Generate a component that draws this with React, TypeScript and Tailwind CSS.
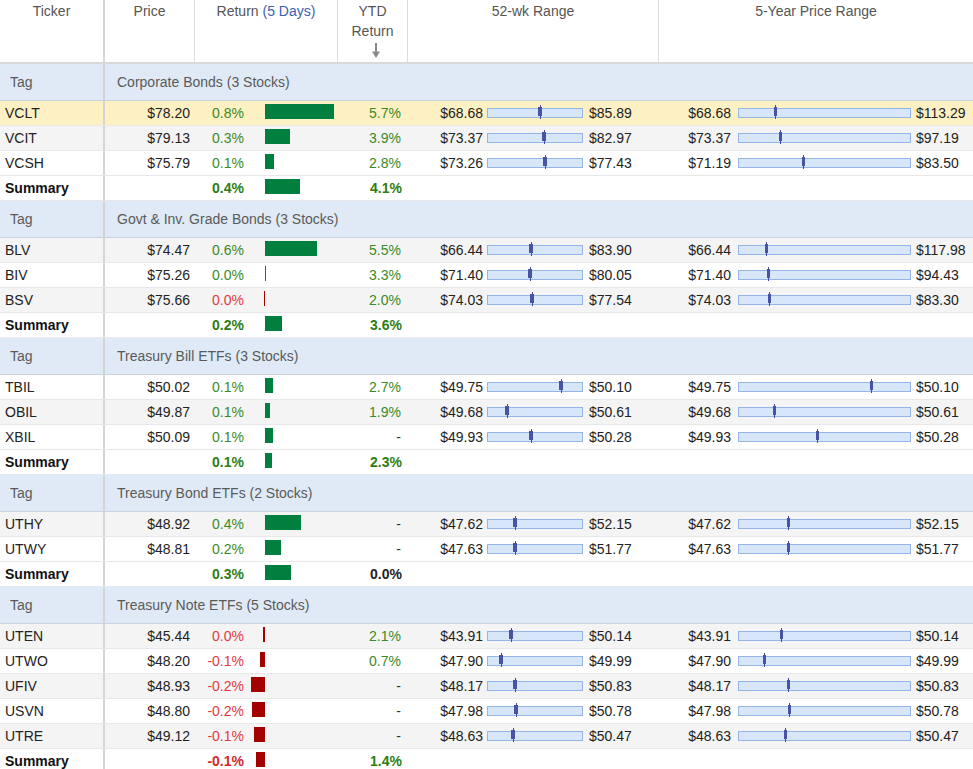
import React from "react";

type Row = {
  ticker: string;
  price: string;
  ret: string;
  bar: number;
  ytd: string;
  wk: [number, number];
  yr: [number, number];
};

type Group = {
  label: string;
  rows: Row[];
  sumRet: string;
  sumBar: number;
  sumYtd: string;
};

const groups: Group[] = [
  {
    label: "Corporate Bonds (3 Stocks)",
    rows: [
      { ticker: "VCLT", price: "78.20", ret: "0.8%", bar: 69, ytd: "5.7%", wk: [68.68, 85.89], yr: [68.68, 113.29] },
      { ticker: "VCIT", price: "79.13", ret: "0.3%", bar: 25, ytd: "3.9%", wk: [73.37, 82.97], yr: [73.37, 97.19] },
      { ticker: "VCSH", price: "75.79", ret: "0.1%", bar: 9, ytd: "2.8%", wk: [73.26, 77.43], yr: [71.19, 83.5] },
    ],
    sumRet: "0.4%",
    sumBar: 35,
    sumYtd: "4.1%",
  },
  {
    label: "Govt & Inv. Grade Bonds (3 Stocks)",
    rows: [
      { ticker: "BLV", price: "74.47", ret: "0.6%", bar: 52, ytd: "5.5%", wk: [66.44, 83.9], yr: [66.44, 117.98] },
      { ticker: "BIV", price: "75.26", ret: "0.0%", bar: 1, ytd: "3.3%", wk: [71.4, 80.05], yr: [71.4, 94.43] },
      { ticker: "BSV", price: "75.66", ret: "0.0%", bar: -1, ytd: "2.0%", wk: [74.03, 77.54], yr: [74.03, 83.3] },
    ],
    sumRet: "0.2%",
    sumBar: 17,
    sumYtd: "3.6%",
  },
  {
    label: "Treasury Bill ETFs (3 Stocks)",
    rows: [
      { ticker: "TBIL", price: "50.02", ret: "0.1%", bar: 8, ytd: "2.7%", wk: [49.75, 50.1], yr: [49.75, 50.1] },
      { ticker: "OBIL", price: "49.87", ret: "0.1%", bar: 5, ytd: "1.9%", wk: [49.68, 50.61], yr: [49.68, 50.61] },
      { ticker: "XBIL", price: "50.09", ret: "0.1%", bar: 8, ytd: "-", wk: [49.93, 50.28], yr: [49.93, 50.28] },
    ],
    sumRet: "0.1%",
    sumBar: 7,
    sumYtd: "2.3%",
  },
  {
    label: "Treasury Bond ETFs (2 Stocks)",
    rows: [
      { ticker: "UTHY", price: "48.92", ret: "0.4%", bar: 36, ytd: "-", wk: [47.62, 52.15], yr: [47.62, 52.15] },
      { ticker: "UTWY", price: "48.81", ret: "0.2%", bar: 16, ytd: "-", wk: [47.63, 51.77], yr: [47.63, 51.77] },
    ],
    sumRet: "0.3%",
    sumBar: 26,
    sumYtd: "0.0%",
  },
  {
    label: "Treasury Note ETFs (5 Stocks)",
    rows: [
      { ticker: "UTEN", price: "45.44", ret: "0.0%", bar: -2, ytd: "2.1%", wk: [43.91, 50.14], yr: [43.91, 50.14] },
      { ticker: "UTWO", price: "48.20", ret: "-0.1%", bar: -5, ytd: "0.7%", wk: [47.9, 49.99], yr: [47.9, 49.99] },
      { ticker: "UFIV", price: "48.93", ret: "-0.2%", bar: -14, ytd: "-", wk: [48.17, 50.83], yr: [48.17, 50.83] },
      { ticker: "USVN", price: "48.80", ret: "-0.2%", bar: -13, ytd: "-", wk: [47.98, 50.78], yr: [47.98, 50.78] },
      { ticker: "UTRE", price: "49.12", ret: "-0.1%", bar: -11, ytd: "-", wk: [48.63, 50.47], yr: [48.63, 50.47] },
    ],
    sumRet: "-0.1%",
    sumBar: -9,
    sumYtd: "1.4%",
  },
];

const fmt = (n: number) => "$" + n.toFixed(2);

const RangeBar: React.FC<{ width: number; lo: number; hi: number; value: number; body: number }> = ({
  width,
  lo,
  hi,
  value,
  body,
}) => {
  const inner = width - 2;
  const x = ((value - lo) / (hi - lo)) * inner;
  return (
    <div
      className="relative h-[10px] border border-[#94b5e6] bg-[#d7e6f8] shrink-0"
      style={{ width }}
    >
      <div className="absolute top-[-4px] h-[14px] w-px bg-[#3f4a98]" style={{ left: x }} />
      <div
        className="absolute top-[-2px] h-[9px] bg-[#4853a3]"
        style={{ left: x - Math.floor(body / 2), width: body }}
      />
    </div>
  );
};

const ReturnBar: React.FC<{ bar: number }> = ({ bar }) => (
  <div className="flex w-[89px] items-start pt-[3px] h-full">
    <div className="flex w-[16px] justify-end">
      {bar < 0 && <div className="h-[15px] bg-[#a30000]" style={{ width: -bar }} />}
    </div>
    {bar > 0 && <div className="h-[15px] bg-[#007f3f]" style={{ width: bar }} />}
  </div>
);

const App: React.FC = () => {
  let idx = 0;
  const rows: React.ReactNode[] = [];

  groups.forEach((g, gi) => {
    idx++;
    rows.push(
      <div key={`tag-${gi}`} className="flex h-[37px] border-b border-[#c9d4df] bg-[#dfeaf6] text-[#5a5a5a]">
        <div className="flex w-[105px] items-center border-r-2 border-[#d4d4d4] pl-[10px]">Tag</div>
        <div className="flex items-center pl-[12px]">{g.label}</div>
      </div>
    );
    g.rows.forEach((r) => {
      idx++;
      const price = parseFloat(r.price);
      const neg = r.bar < 0;
      // hovered row is yellow, others striped
      const bg =
        r.ticker === "VCLT" ? "bg-[#fdf0c3]" : idx % 2 === 1 ? "bg-[#f4f4f4]" : "bg-white";
      rows.push(
        <div key={r.ticker} className={`flex h-[25px] border-b border-[#e8e8e8] leading-[24px] text-[#222] ${bg}`}>
          <div className="w-[105px] border-r-2 border-[#d4d4d4] pl-[5px]">{r.ticker}</div>
          <div className="w-[90px] pr-[5px] text-right">{"$" + r.price}</div>
          <div className="flex w-[143px]">
            <div className={`w-[54px] pr-[5px] text-right ${neg ? "text-[#e53a3f]" : "text-[#3a8a26]"}`}>{r.ret}</div>
            <ReturnBar bar={r.bar} />
          </div>
          <div className={`w-[70px] pr-[7px] text-right ${r.ytd === "-" ? "text-[#333]" : "text-[#3a8a26]"}`}>
            {r.ytd}
          </div>
          <div className="flex w-[251px] items-center">
            <div className="w-[75px] text-right">{fmt(r.wk[0])}</div>
            <div className="ml-[4px]">
              <RangeBar width={96} lo={r.wk[0]} hi={r.wk[1]} value={price} body={4} />
            </div>
            <div className="ml-[6px]">{fmt(r.wk[1])}</div>
          </div>
          <div className="flex flex-1 items-center">
            <div className="w-[72px] text-right">{fmt(r.yr[0])}</div>
            <div className="ml-[7px]">
              <RangeBar width={173} lo={r.yr[0]} hi={r.yr[1]} value={price} body={3} />
            </div>
            <div className="ml-[5px]">{fmt(r.yr[1])}</div>
          </div>
        </div>
      );
    });
    idx++;
    const sneg = g.sumBar < 0;
    rows.push(
      <div key={`sum-${gi}`} className="flex h-[25px] border-b border-[#e8e8e8] bg-white font-bold leading-[24px] text-[#111]">
        <div className="w-[105px] border-r-2 border-[#d4d4d4] pl-[5px]">Summary</div>
        <div className="w-[90px]" />
        <div className="flex w-[143px]">
          <div className={`w-[54px] pr-[5px] text-right ${sneg ? "text-[#d42a2a]" : "text-[#2d7d12]"}`}>{g.sumRet}</div>
          <ReturnBar bar={g.sumBar} />
        </div>
        <div className={`w-[70px] pr-[6px] text-right ${g.sumYtd === "0.0%" ? "text-[#222]" : "text-[#2d7d12]"}`}>
          {g.sumYtd}
        </div>
      </div>
    );
  });

  return (
    <div className="h-[769px] w-full overflow-hidden bg-white text-[14px] font-['Liberation_Sans',Arial,sans-serif]">
      <div className="flex h-[64px] border-b-2 border-[#d9d9d9] leading-[20px] text-[#555]">
        <div className="w-[105px] border-r-2 border-[#d4d4d4] pt-[1px] text-center">Ticker</div>
        <div className="w-[90px] border-r border-[#dcdcdc] pt-[1px] text-center">Price</div>
        <div className="w-[143px] border-r border-[#dcdcdc] pt-[1px] text-center">
          Return <span className="text-[#3a62b0]">(5 Days)</span>
        </div>
        <div className="w-[70px] border-r border-[#dcdcdc] pt-[1px] text-center">
          <div>YTD</div>
          <div>Return</div>
          <div className="flex justify-center pl-[7px] pt-[2px]">
            <svg width="10" height="15" viewBox="0 0 10 15">
              <line x1="5" y1="0" x2="5" y2="10" stroke="#8a8a8a" strokeWidth="2" />
              <path d="M1 8.5 L9 8.5 L5 15 Z" fill="#8a8a8a" />
            </svg>
          </div>
        </div>
        <div className="w-[251px] border-r border-[#dcdcdc] pt-[1px] text-center">52-wk Range</div>
        <div className="flex-1 pt-[1px] text-center">5-Year Price Range</div>
      </div>
      {rows}
    </div>
  );
};

export default App;
